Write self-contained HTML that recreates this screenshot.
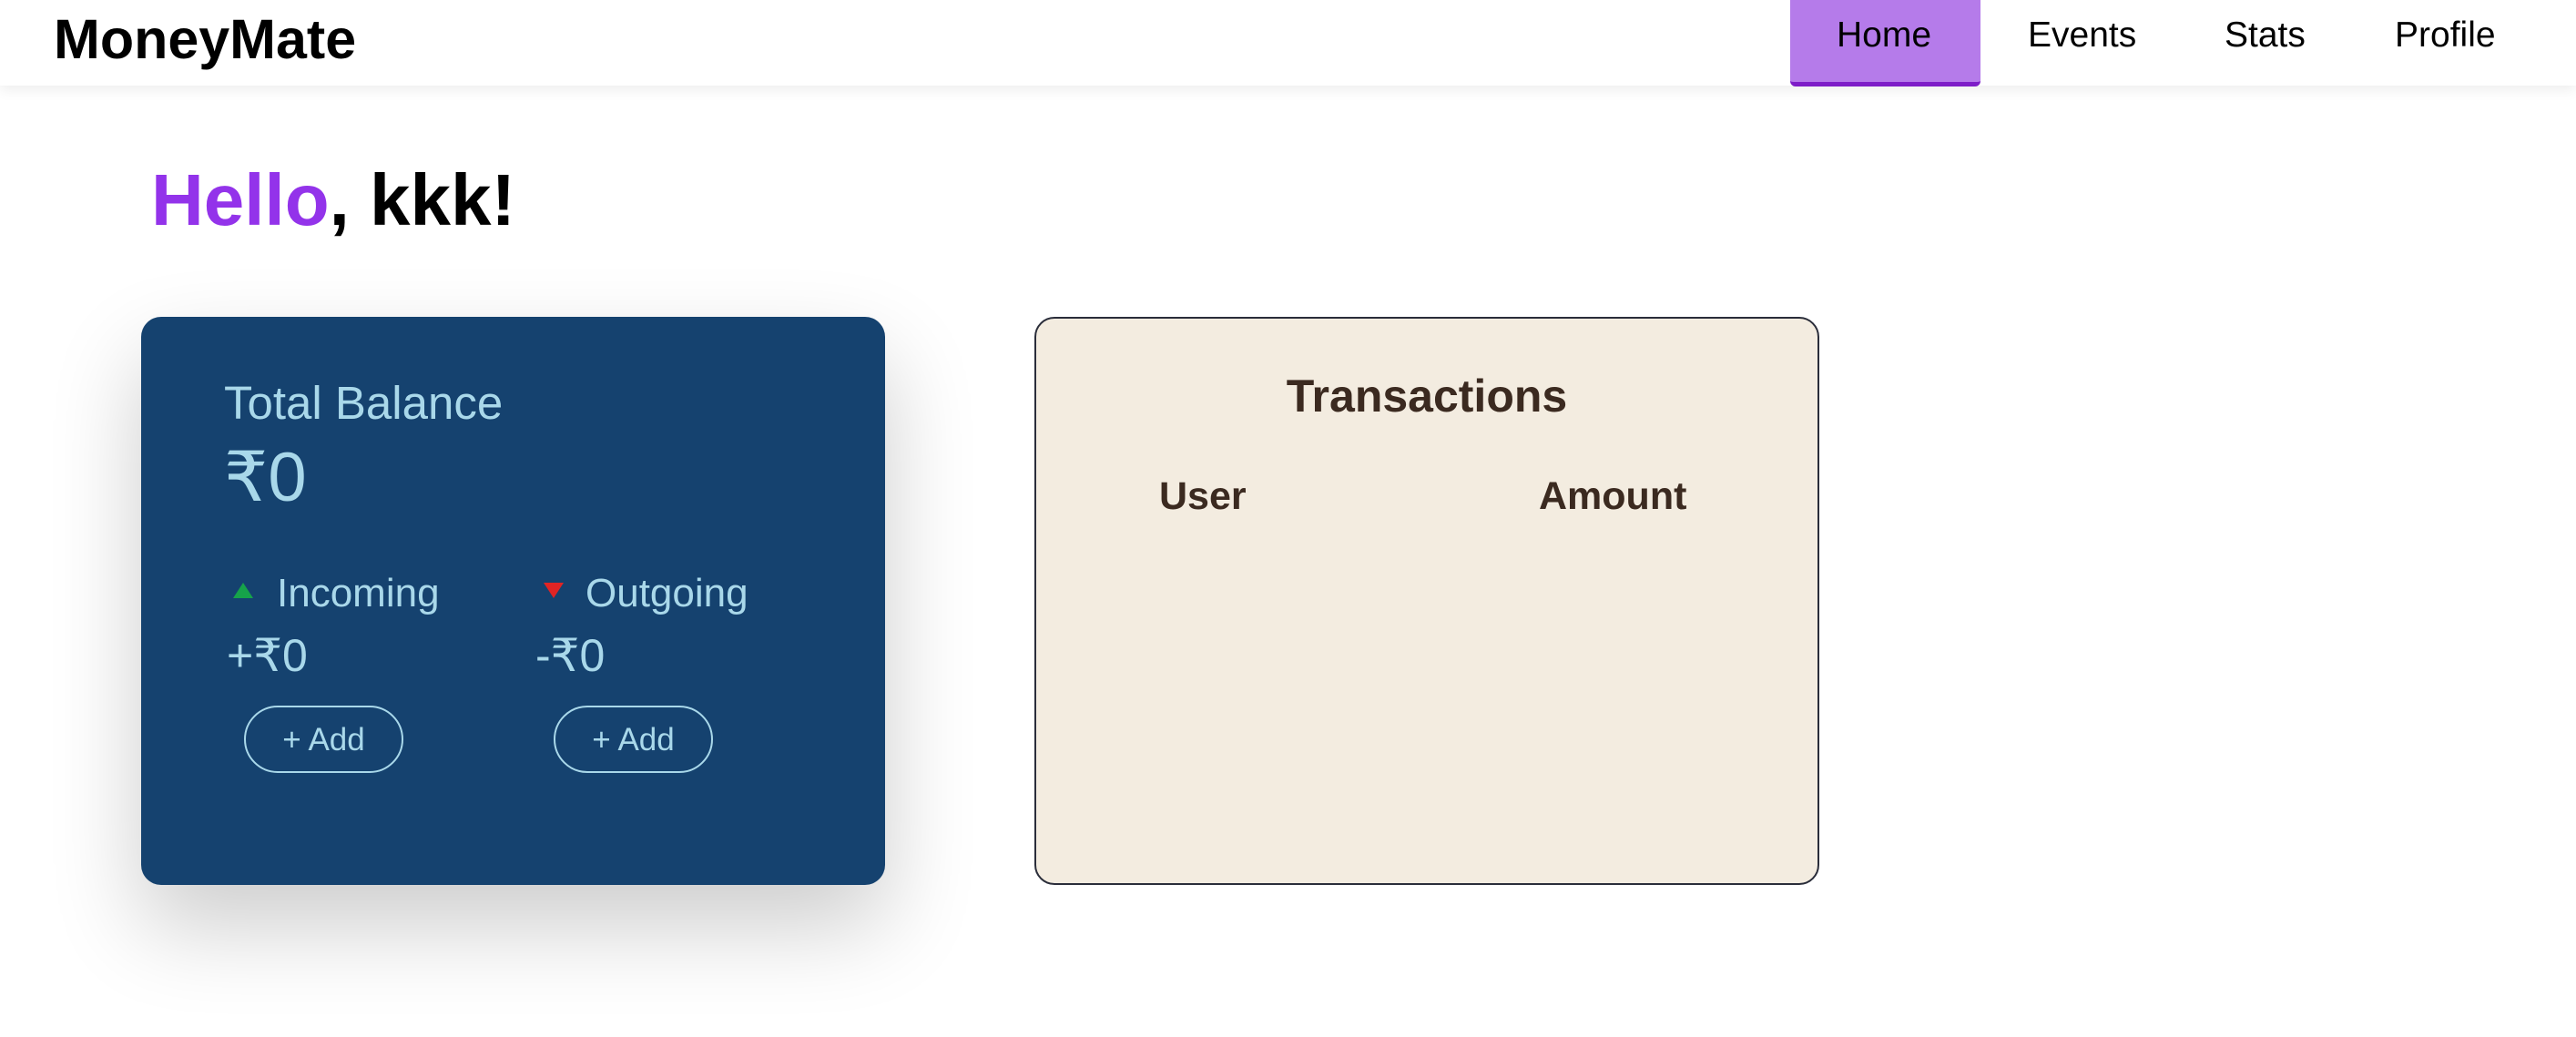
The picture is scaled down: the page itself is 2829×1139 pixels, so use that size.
<!DOCTYPE html>
<html><head><meta charset="utf-8"><style>
*{margin:0;padding:0;box-sizing:border-box}
body{width:2829px;height:1139px;background:#fff;position:relative;overflow:hidden;font-family:"Liberation Sans","DejaVu Sans",sans-serif}
.a{position:absolute;line-height:1;white-space:nowrap}
#nav{position:absolute;left:0;top:0;width:2829px;height:94px;background:#fff;box-shadow:0 4px 14px rgba(0,0,0,0.08)}
#home{position:absolute;left:1966px;top:0;width:209px;height:95px;background:#b57bea;border-bottom:5px solid #7e1dc8;border-radius:0 0 6px 6px}
.nv{font-size:39px;color:#000;top:19px}
#card{position:absolute;left:155px;top:348px;width:817px;height:624px;background:#15426f;border-radius:22px;box-shadow:0 45px 100px rgba(0,0,0,0.2)}
.lb{color:#a9d8ea}
.btn{position:absolute;top:775px;width:175px;height:74px;border:2px solid #a9d8ea;border-radius:37px;color:#a9d8ea;font-size:35px;text-align:center;line-height:72px}
#tx{position:absolute;left:1136px;top:348px;width:862px;height:624px;background:#f3ece0;border:2px solid #2a2d3a;border-radius:22px}
.br{color:#3b2a20;font-weight:bold}
</style></head><body>
<div id="nav"></div>
<div id="home"></div>
<div class="a" style="left:59px;top:13px;font-size:61px;font-weight:bold;color:#000">MoneyMate</div>
<div class="a nv" style="left:2017px">Home</div>
<div class="a nv" style="left:2227px">Events</div>
<div class="a nv" style="left:2443px">Stats</div>
<div class="a nv" style="left:2630px">Profile</div>

<div class="a" style="left:166px;top:180px;font-size:80px;font-weight:bold;color:#000"><span style="color:#9333ea">Hello</span>, kkk!</div>

<div id="card"></div>
<div class="a lb" style="left:246px;top:417px;font-size:51px">Total Balance</div>
<div class="a lb" style="left:246px;top:487px;font-size:76px">₹0</div>
<svg class="a" style="left:256px;top:640px" width="22" height="18"><polygon points="11,0 22,17 0,17" fill="#16a34a"/></svg>
<div class="a lb" style="left:304px;top:630px;font-size:44px">Incoming</div>
<svg class="a" style="left:597px;top:640px" width="22" height="18"><polygon points="0,0 22,0 11,17" fill="#e02424"/></svg>
<div class="a lb" style="left:643px;top:630px;font-size:44px">Outgoing</div>
<div class="a lb" style="left:249px;top:695px;font-size:50px">+₹0</div>
<div class="a lb" style="left:588px;top:695px;font-size:50px">-₹0</div>
<div class="btn" style="left:268px">+ Add</div>
<div class="btn" style="left:608px">+ Add</div>

<div id="tx"></div>
<div class="a br" style="left:1136px;width:862px;text-align:center;top:410px;font-size:50px">Transactions</div>
<div class="a br" style="left:1273px;top:524px;font-size:43px">User</div>
<div class="a br" style="left:1690px;top:524px;font-size:43px">Amount</div>
</body></html>
